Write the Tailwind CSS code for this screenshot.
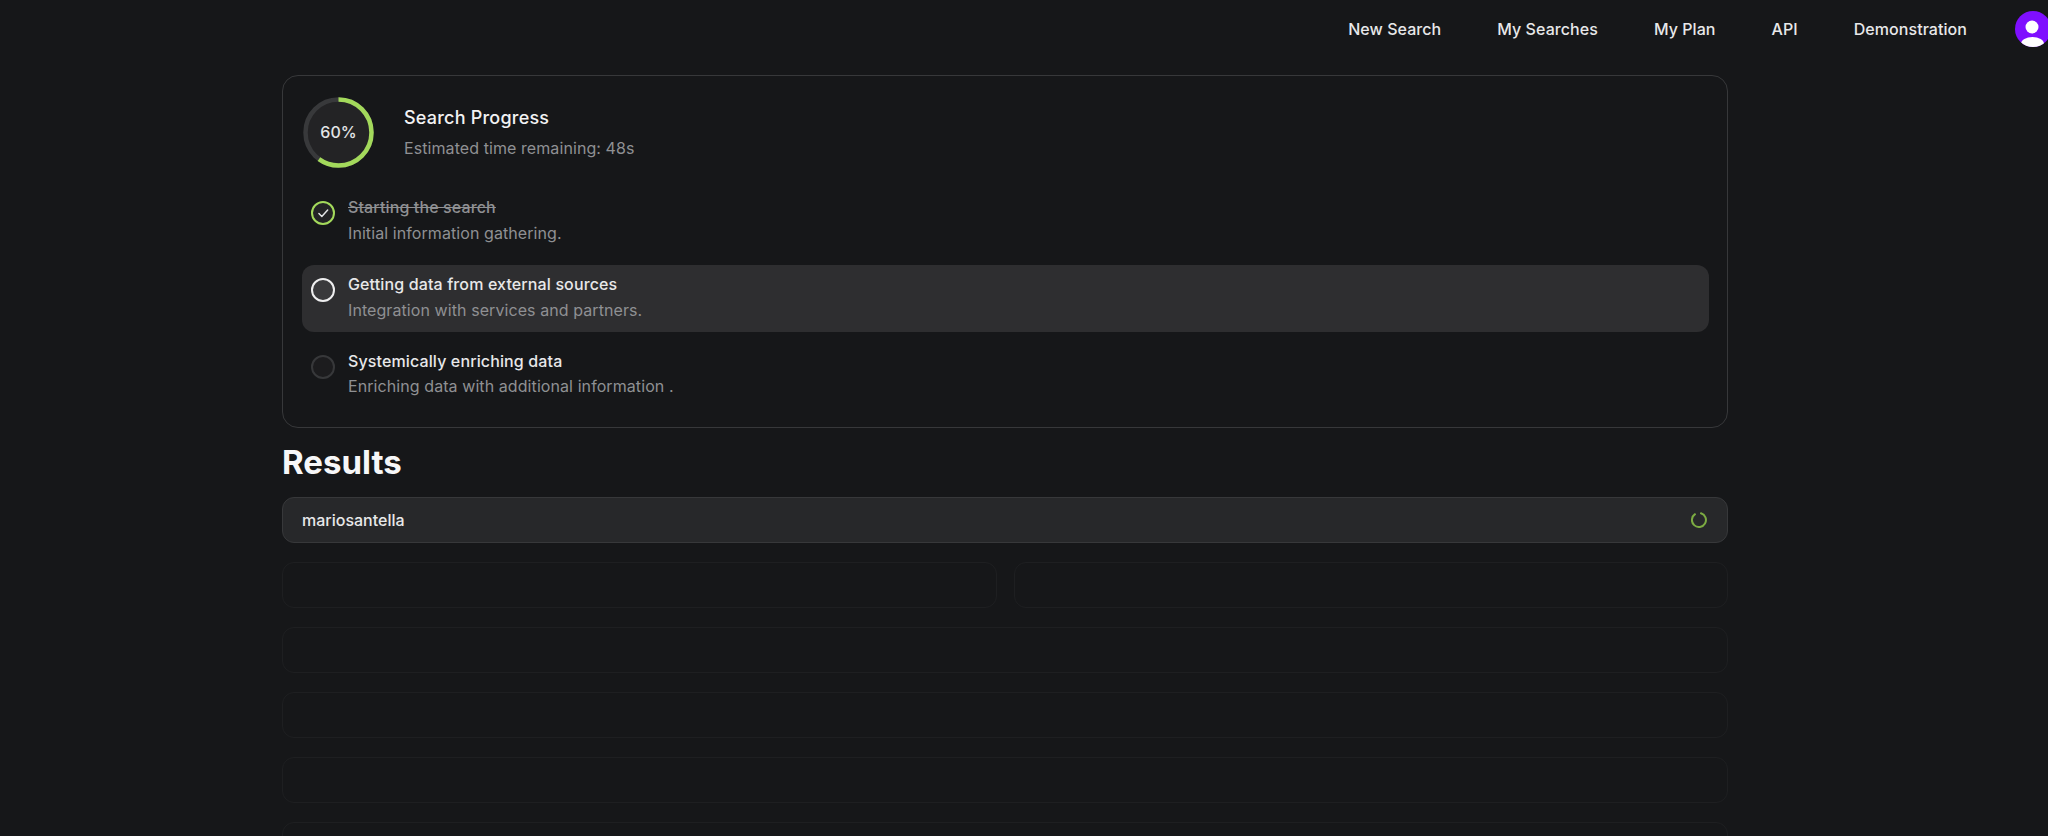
<!DOCTYPE html>
<html><head><meta charset="utf-8"><script src="https://cdn.jsdelivr.net/npm/@tailwindcss/browser@4"></script></head>
<body class="bg-[#161719] overflow-hidden font-['Inter',sans-serif] antialiased">
<div class="h-[836px] w-[2048px] overflow-hidden flex flex-col">
  <nav class="h-[57px] shrink-0 flex items-center justify-end gap-[56px] text-[#e8e8e9] text-[16px] font-medium tracking-[0.004em]">
    <a>New Search</a><a>My Searches</a><a>My Plan</a><a>API</a><a>Demonstration</a>
    <div class="w-[36px] h-[36px] shrink-0 -ml-[8px] -mr-[3px] rounded-full bg-[#7f0fff] overflow-hidden">
      <svg viewBox="0 0 36 36" class="w-full h-full"><ellipse cx="17" cy="16" rx="6.5" ry="6.5" fill="#fff"/><ellipse cx="17.5" cy="33" rx="11.5" ry="7" fill="#fff"/></svg>
    </div>
  </nav>
  <main class="ml-[282px] w-[1446px] mt-[18px]">
    <section class="border border-[#37383a] rounded-2xl h-[353px] pt-[21px] pl-[19px] pr-[18px]">
      <div class="flex items-center h-[70px] gap-[30px] pl-[1px]">
        <div class="relative w-[71px] h-[71px] shrink-0">
          <svg viewBox="0 0 71 71" class="w-full h-full -rotate-90">
            <circle cx="35.5" cy="35.5" r="33" fill="#232325" stroke="#38393b" stroke-width="4.5"/>
            <circle cx="35.5" cy="35.5" r="33" fill="none" stroke="#a3d95b" stroke-width="4.5" stroke-dasharray="124.4 207.3"/>
          </svg>
          <span class="absolute inset-0 flex items-center justify-center text-[16px] font-medium text-[#e4e5e7]">60%</span>
        </div>
        <div class="flex flex-col">
          <h2 class="text-[18px] leading-[28px] font-medium tracking-[0.012em] text-[#f2f2f3]">Search Progress</h2>
          <p class="text-[16px] leading-[24px] mt-[4px] tracking-[0.005em] text-[#8f9093]">Estimated time remaining: 48s</p>
        </div>
      </div>
      <ul class="mt-[21px] flex flex-col gap-[10px] tracking-[0.008em]">
        <li class="h-[67px] rounded-xl flex pl-[9px] gap-[13px] pt-[7px]">
          <div class="mt-[6px] w-[24px] h-[24px] shrink-0 rounded-full border-2 border-[#a3d95b] bg-[#232325] flex items-center justify-center">
            <svg viewBox="0 0 24 24" class="w-[14px] h-[14px]" fill="none" stroke="#e4e5e7" stroke-width="2.5" stroke-linecap="round" stroke-linejoin="round"><path d="M5 13l5 5L20 7"/></svg>
          </div>
          <div>
            <p class="text-[16px] leading-[24px] font-medium text-[#8f9093] line-through">Starting the search</p>
            <p class="text-[16px] leading-[24px] mt-[2px] tracking-[0.005em] text-[#8f9093]">Initial information gathering.</p>
          </div>
        </li>
        <li class="h-[67px] rounded-xl flex pl-[9px] gap-[13px] pt-[7px] bg-[#2e2e30]">
          <div class="mt-[6px] w-[24px] h-[24px] shrink-0 rounded-full border-2 border-[#eeeeef] bg-[#3a3a3c]"></div>
          <div>
            <p class="text-[16px] leading-[24px] font-medium text-[#e8e8e9]">Getting data from external sources</p>
            <p class="text-[16px] leading-[24px] mt-[2px] tracking-[0.005em] text-[#8f9093]">Integration with services and partners.</p>
          </div>
        </li>
        <li class="h-[67px] rounded-xl flex pl-[9px] gap-[13px] pt-[7px]">
          <div class="mt-[6px] w-[24px] h-[24px] shrink-0 rounded-full border-2 border-[#37383a] bg-[#1c1c1e]"></div>
          <div>
            <p class="text-[16px] leading-[24px] font-medium text-[#e8e8e9]">Systemically enriching data</p>
            <p class="text-[16px] leading-[24px] mt-[1px] tracking-[0.005em] text-[#8f9093]">Enriching data with additional information .</p>
          </div>
        </li>
      </ul>
    </section>
    <h1 class="mt-[16px] text-[33px] leading-[36px] font-bold text-[#f7f7f8]">Results</h1>
    <div class="mt-[17px] h-[46px] rounded-xl border border-[#37383a] bg-[#27282a] flex items-center justify-between pl-[19px] pr-[20px]">
      <span class="text-[16px] font-medium text-[#e8e8e9]">mariosantella</span>
      <svg viewBox="0 0 16 16" class="w-[16px] h-[16px]" fill="none" stroke="#7cab42" stroke-width="2"><path d="M4 2.2 A7 7 0 1 0 10 1.3" stroke-linecap="round"/></svg>
    </div>
    <div class="mt-[19px] grid grid-cols-2 gap-x-[17px] gap-y-[19px]">
      <div class="h-[46px] rounded-xl border border-[#1e1f21]"></div>
      <div class="h-[46px] rounded-xl border border-[#1e1f21]"></div>
      <div class="col-span-2 h-[46px] rounded-xl border border-[#1e1f21]"></div>
      <div class="col-span-2 h-[46px] rounded-xl border border-[#1e1f21]"></div>
      <div class="col-span-2 h-[46px] rounded-xl border border-[#1e1f21]"></div>
      <div class="col-span-2 h-[46px] rounded-xl border border-[#1e1f21]"></div>
    </div>
  </main>
</div>
</body></html>
